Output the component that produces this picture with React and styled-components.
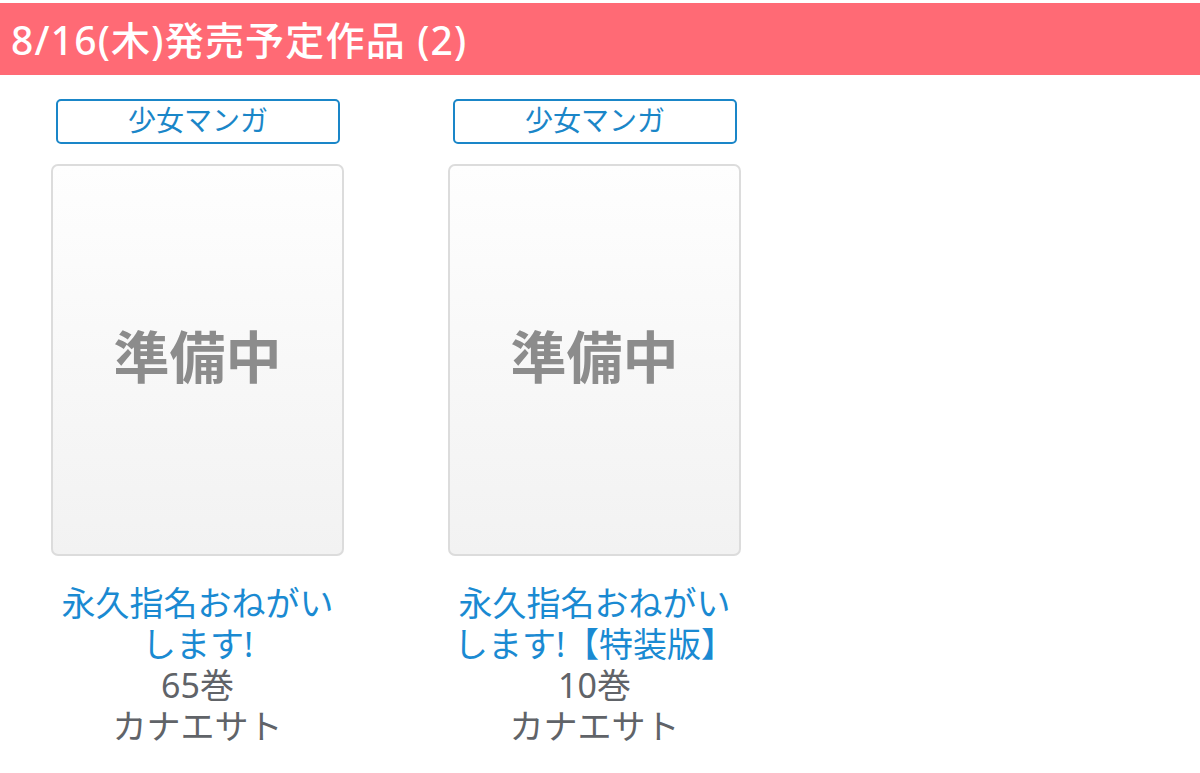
import React from "react";
import styled, { createGlobalStyle } from "styled-components";

const Global = createGlobalStyle`
  html, body { margin: 0; padding: 0; background: #fff; }
  body { font-family: "Noto Sans", "Noto Sans CJK JP", sans-serif; }
`;

const Page = styled.div`
  padding-top: 3px;
`;

const Header = styled.h2`
  margin: 0;
  height: 72px;
  background: #ff6a75;
  color: #fff;
  font-size: 39px;
  font-weight: 500;
  letter-spacing: 1.2px;
  display: flex;
  align-items: center;
  padding-left: 11px;
  padding-bottom: 2px;
  box-sizing: border-box;
`;

const Row = styled.div`
  display: flex;
  gap: 104px;
  padding: 24px 0 0 51px;
`;

const Card = styled.div`
  width: 293px;
  display: flex;
  flex-direction: column;
  align-items: stretch;
`;

const Tag = styled.div`
  margin: 0 4px 0 5px;
  height: 45px;
  box-sizing: border-box;
  border: 2.5px solid #1a86c8;
  border-radius: 5px;
  color: #1a86c8;
  font-size: 28px;
  display: flex;
  align-items: center;
  justify-content: center;
  line-height: 1;
  padding-bottom: 4px;
`;

const Cover = styled.div`
  margin-top: 20px;
  height: 392px;
  box-sizing: border-box;
  border: 2px solid #dcdcdc;
  border-radius: 7px;
  background: linear-gradient(#fefefe, #f2f2f2);
  display: flex;
  align-items: center;
  justify-content: center;
  color: #8c8c8c;
  font-size: 56px;
  font-weight: 700;
  padding-bottom: 14px;
`;

const Info = styled.div`
  margin-top: 27px;
  text-align: center;
  font-size: 34px;
  line-height: 41px;
`;

const Title = styled.div`
  color: #1a8ad2;
`;

const Meta = styled.div`
  color: #606368;
`;

const items = [
  { title: "永久指名おねがいします!", vol: "65巻" },
  { title: "永久指名おねがいします!【特装版】", vol: "10巻" },
];

export default function App() {
  return (
    <Page>
      <Global />
      <Header>8/16(木)発売予定作品 (2)</Header>
      <Row>
        {items.map((it, i) => (
          <Card key={i}>
            <Tag>少女マンガ</Tag>
            <Cover>準備中</Cover>
            <Info>
              <Title>{it.title}</Title>
              <Meta>{it.vol}</Meta>
              <Meta>カナエサト</Meta>
            </Info>
          </Card>
        ))}
      </Row>
    </Page>
  );
}
